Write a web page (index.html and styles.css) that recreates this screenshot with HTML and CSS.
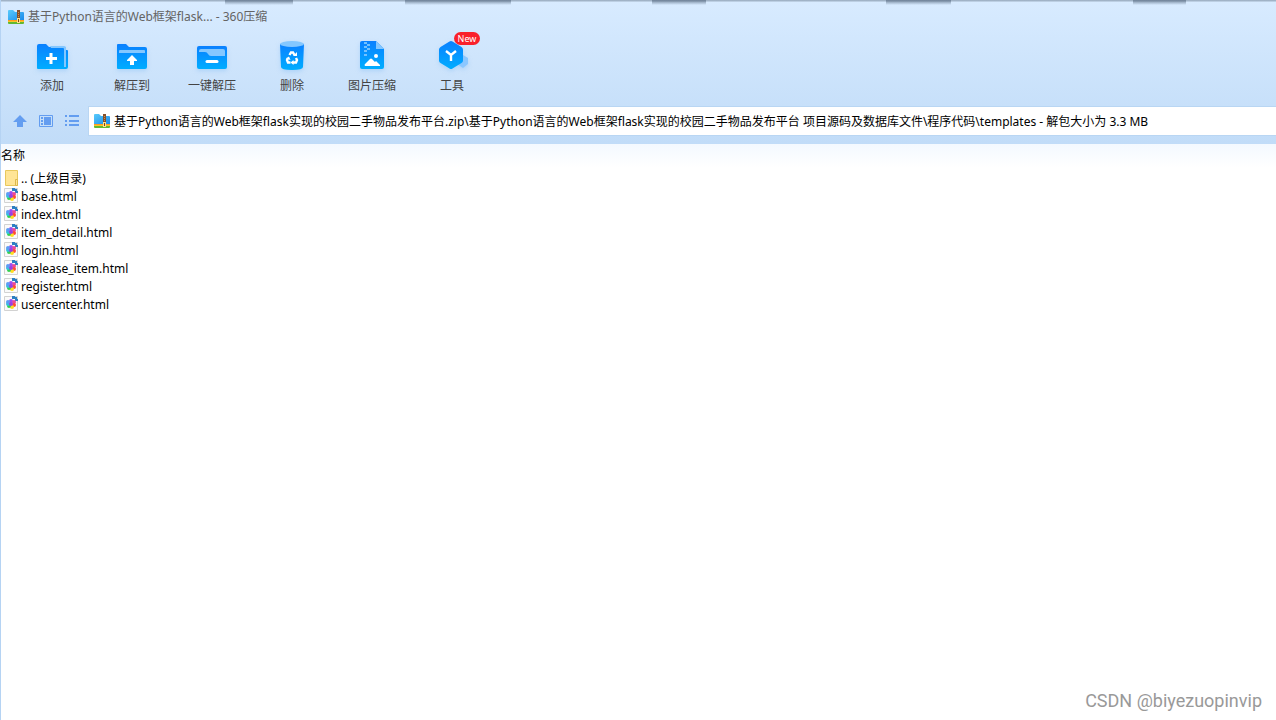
FILE: index.html
```html
<!DOCTYPE html>
<html lang="zh-CN">
<head>
<meta charset="utf-8">
<title>360压缩</title>
<link rel="stylesheet" href="styles.css">
</head>
<body>
<svg class="defs" aria-hidden="true">
  <defs>
    <linearGradient id="blue" x1="0" y1="0" x2="0" y2="1"><stop offset="0" stop-color="#0a80ff"/><stop offset="1" stop-color="#00adff"/></linearGradient>
    <linearGradient id="sky" x1="0" y1="0" x2="1" y2="1"><stop offset="0" stop-color="#59cbfb"/><stop offset="1" stop-color="#1687ea"/></linearGradient>
    <symbol id="zip" viewBox="0 0 16 16">
      <path d="M0 2q0-1 1-1h4l2 2h8q1 0 1 1v8H0z" fill="url(#sky)"/>
      <path d="M0 11h16v1H0z" fill="#ff9c1c"/><path d="M0 12h16v1H0z" fill="#f6c52c"/><path d="M0 13h16v1q0 1-1 1H1q-1 0-1-1z" fill="#62b832"/>
      <path d="M9 1h3v9H9z" fill="#85502a"/><path d="M10 3h1v1h-1zM10 5h1v1h-1zM10 7h1v1h-1z" fill="#c98f50"/>
      <path d="M9 9h3v5H9z" fill="#ffe08a"/><path d="M10 10h1v3h-1z" fill="#7d4314"/>
    </symbol>
    <symbol id="page" viewBox="0 0 15 16">
      <path d="M.5.500h13v14H.5z" fill="#fafafa" stroke="#d2d2d2"/>
      <path d="M8 0h3v1h2v2h1v2h-3V3H8z" fill="#2d7fc3"/>
      <g transform="translate(7 8)">
        <circle cx="0" cy="-3" r="2" fill="#9c4bf2"/>
        <circle cx="3" cy="-2" r="2" fill="#e8489a"/>
        <circle cx="3" cy="1" r="2" fill="#ff4b36"/>
        <circle cx="1" cy="3" r="2" fill="#ffdc22"/>
        <circle cx="-2" cy="2" r="2" fill="#36cf50"/>
        <circle cx="-3" cy="0" r="2" fill="#35c3dc"/>
        <circle cx="-3" cy="-2" r="2" fill="#5c9cf4"/>
        <circle r="2" fill="#9a3fe0"/>
      </g>
    </symbol>
  </defs>
</svg>
<div class="window">
  <header class="chrome">
    <div class="shade"></div>
    <div class="titlebar">
      <svg class="zip"><use href="#zip"/></svg>
      <h1 class="title">基于Python语言的Web框架flask... - 360压缩</h1>
    </div>
    <nav class="toolbar" aria-label="工具栏">
      <button class="tool"><svg class="tool-icon" viewBox="0 0 32 32">
        <path d="M1 5q0-2 2-2h7l3 3h15q2 0 2 2v1h1q1 0 1 1v16q0 2-2 2H2q-1 0-1-1z" fill="url(#blue)"/>
        <path d="M14 5h14q2 0 2 2v19h-2V8q0-1-1-1H15z" fill="#84c7ff"/>
        <path d="M15 12v11M10 17.500h11" stroke="#fff" stroke-width="3"/></svg>添加</button>
      <button class="tool"><svg class="tool-icon" viewBox="0 0 32 32">
        <path d="M1 4q0-1 1-1h8l3 3h16q2 0 2 2v18q0 2-2 2H2q-1 0-1-1z" fill="url(#blue)"/>
        <path d="M3 12v-2q0-1 1-1h24q1 0 1 1v2z" fill="#84c7ff"/>
        <path d="M16 14l5 5v1h-3v4h-4v-4h-3v-1z" fill="#fff"/></svg>解压到</button>
      <button class="tool"><svg class="tool-icon" viewBox="0 0 32 32">
        <path d="M1 7q0-2 2-2h26q2 0 2 2v19q0 2-2 2H3q-2 0-2-2z" fill="url(#blue)"/>
        <path d="M3 10q0-2 2-2h22q2 0 2 2v5H15q-2 0-3-2t-3-2H3z" fill="#84c7ff"/>
        <path d="M11 20.500h10" stroke="#fff" stroke-width="3" stroke-linecap="round"/></svg>一键解压</button>
      <button class="tool"><svg class="tool-icon" viewBox="0 0 32 32">
        <path d="M4 3h24l-1 23q0 3-11 3T5 26z" fill="url(#blue)"/><ellipse cx="16" cy="3" rx="12" ry="3" fill="#84c7ff"/>
        <g fill="none" stroke="#fff" stroke-width="2.400"><path d="M13.500 14l1.500-2.500h2l1.500 2.500M20 17l1 2-1 2.500h-3M14.500 21.500H12L11 19l1-2"/></g>
        <path d="M17 15h4v-4zM17.500 19v5l-3-2.500zM10 17.500l3-2 1.500 3.500z" fill="#fff"/></svg>删除</button>
      <button class="tool"><svg class="tool-icon" viewBox="0 0 32 32">
        <path d="M4 2q0-2 2-2h14l8 8v18q0 2-2 2H6q-2 0-2-2z" fill="url(#blue)"/><path d="M20 0l8 8h-8z" fill="#84c7ff"/>
        <path d="M8 1h3v2H8zM11 3h3v2h-3zM8 5h3v2H8zM11 7h3v2h-3zM8 9h3v2H8zM8 13h3v2H8z" fill="#72c1ff"/>
        <circle cx="20" cy="15" r="2" fill="#fff"/><path d="M9 25q-1-1 0-2l5-5q1-1 2 0l3 3 1-1 4 4v1z" fill="#fff"/></svg>图片压缩</button>
      <button class="tool"><svg class="tool-icon" viewBox="0 0 32 32">
        <path d="M27 14l5 3v6l-5 4-6-4v-6z" fill="#8bc7ff"/>
        <path d="M13.500 0.500q1.500-1 3 0l9 5.500q1.500 1 1.500 2.500v11q0 1.500-1.500 2.500l-9 5.500q-1.500 1-3 0L4.500 22Q3 21 3 19.500v-11Q3 7 4.500 6z" fill="url(#blue)"/>
        <path d="M10 10l5 4 5-4M15 14v6" fill="none" stroke="#fff" stroke-width="2.400"/></svg>工具<span class="badge">New</span></button>
    </nav>
    <div class="location">
      <button class="nav-button" aria-label="上级目录"><svg viewBox="0 0 16 16"><path d="M8 2l7 7h-4v5H5V9H1z" fill="#639df0"/></svg></button>
      <button class="nav-button" aria-label="预览视图"><svg viewBox="0 0 16 16"><path d="M1.500 2.500h13v11h-13z" fill="none" stroke="#639df0"/><path d="M3 4h2v2H3zM3 7h2v2H3zM3 10h2v2H3zM6 4h7v8H6z" fill="#639df0"/></svg></button>
      <button class="nav-button" aria-label="列表视图"><svg viewBox="0 0 16 16"><path d="M1 2h2v2H1zM1 7h2v2H1zM1 11h2v2H1zM5 2h10v2H5zM5 7h10v2H5zM5 11h10v2H5z" fill="#639df0"/></svg></button>
      <label class="address"><svg class="zip"><use href="#zip"/></svg><input class="path" type="text" aria-label="路径" value="基于Python语言的Web框架flask实现的校园二手物品发布平台.zip\基于Python语言的Web框架flask实现的校园二手物品发布平台 项目源码及数据库文件\程序代码\templates - 解包大小为 3.3 MB"></label>
    </div>
  </header>
  <main class="content">
    <table class="files">
      <thead><tr><th scope="col">名称</th></tr></thead>
      <tbody>
        <tr><td><span class="file"><svg class="file-icon" viewBox="0 0 15 16"><path d="M1.500.5h12v15h-12z" fill="#ffe596" stroke="#e8c85c"/><path d="M11.500 9.500h2v6h-2z" fill="#ffe596" stroke="#dcb84c"/></svg>.. (上级目录)</span></td></tr>
        <tr><td><span class="file"><svg class="file-icon"><use href="#page"/></svg>base.html</span></td></tr>
        <tr><td><span class="file"><svg class="file-icon"><use href="#page"/></svg>index.html</span></td></tr>
        <tr><td><span class="file"><svg class="file-icon"><use href="#page"/></svg>item_detail.html</span></td></tr>
        <tr><td><span class="file"><svg class="file-icon"><use href="#page"/></svg>login.html</span></td></tr>
        <tr><td><span class="file"><svg class="file-icon"><use href="#page"/></svg>realease_item.html</span></td></tr>
        <tr><td><span class="file"><svg class="file-icon"><use href="#page"/></svg>register.html</span></td></tr>
        <tr><td><span class="file"><svg class="file-icon"><use href="#page"/></svg>usercenter.html</span></td></tr>
      </tbody>
    </table>
    <p class="watermark">CSDN @biyezuopinvip</p>
  </main>
</div>
</body>
</html>
```
FILE: styles.css
```css
* { box-sizing: border-box; }
body { margin: 0; font: 12px/18px "Noto Sans", "Noto Sans CJK SC", sans-serif; color: #000; }
button, input { font: inherit; border: 0; padding: 0; background: none; }
.defs { position: absolute; width: 0; height: 0; }
.window { min-height: 100vh; display: flex; flex-direction: column; border-left: 1px solid #b5d3f3; background: #fff; }
.chrome { position: relative; padding-bottom: 8px; background: linear-gradient(#d8ebff, #c1dcf8); }
.shade {
  position: absolute; inset: 0 0 auto 0; height: 5px;
  background:
    linear-gradient(#71849a, transparent) 224px 0 / 68px 5px no-repeat,
    linear-gradient(#71849a, transparent) 404px 0 / 106px 5px no-repeat,
    linear-gradient(#71849a, transparent) 651px 0 / 54px 5px no-repeat,
    linear-gradient(#71849a, transparent) 885px 0 / 65px 5px no-repeat,
    linear-gradient(#71849a, transparent) 1132px 0 / 53px 5px no-repeat,
    linear-gradient(#93a5b8, transparent 50%);
}
.titlebar { display: flex; align-items: center; gap: 4px; height: 33px; padding-left: 7px; }
.title { margin: 0; font-size: 12px; font-weight: 400; color: #646464; }
.zip { width: 16px; height: 16px; flex: none; }
.toolbar { display: flex; height: 73px; padding: 8px 11px 0; }
.tool { position: relative; width: 80px; display: flex; flex-direction: column; align-items: center; gap: 4px; height: 56px; color: #444; white-space: nowrap; }
.tool-icon { width: 32px; height: 32px; overflow: visible; filter: drop-shadow(0 2px 2px #8fc4f580); }
.badge { position: absolute; top: -9px; left: 42px; width: 26px; height: 13px; border-radius: 7px; background: #f9202b; color: #fff; font-size: 9px; line-height: 13px; }
.location { display: flex; align-items: center; height: 30px; padding-left: 11px; }
.nav-button { width: 16px; height: 16px; margin-right: 10px; }
.nav-button svg { display: block; width: 16px; height: 16px; }
.address { flex: 1; display: flex; align-items: center; gap: 4px; height: 30px; margin-left: -2px; padding-left: 5px; border: 1px solid #b9d6f3; border-right: 0; background: #fff; }
.path { flex: 1; min-width: 0; height: 28px; outline: 0; color: #000; }
.content { flex: 1; display: flex; flex-direction: column; background: linear-gradient(#f3f9ff, #fff 24px); }
.files { width: 100%; border-collapse: collapse; }
.files th { height: 24px; padding: 0; text-align: left; font-weight: 400; }
.files td { height: 18px; padding: 0 0 0 3px; }
.files tbody::before { content: ""; display: block; height: 2px; }
.file { display: flex; align-items: center; gap: 2px; height: 18px; }
.file-icon { width: 15px; height: 16px; flex: none; margin-bottom: 2px; }
.watermark { margin: auto 14px 7px auto; font: 18px/24px Roboto, "Liberation Sans", sans-serif; color: #999; }
```
